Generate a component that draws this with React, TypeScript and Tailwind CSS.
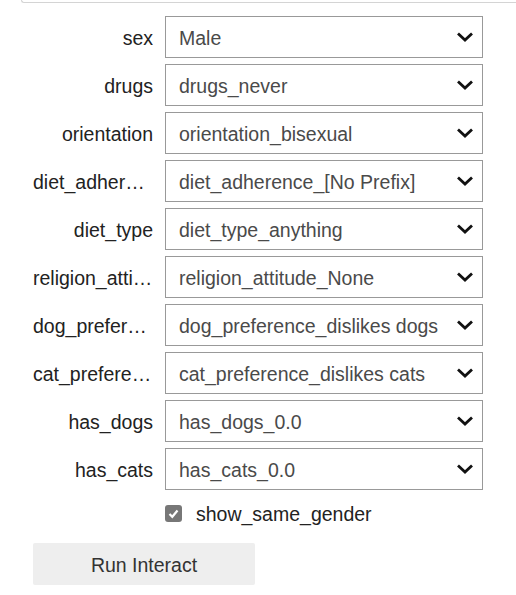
import React from "react";

const rows: [string, string][] = [
  ["sex", "Male"],
  ["drugs", "drugs_never"],
  ["orientation", "orientation_bisexual"],
  ["diet_adherence", "diet_adherence_[No Prefix]"],
  ["diet_type", "diet_type_anything"],
  ["religion_attitude", "religion_attitude_None"],
  ["dog_preference", "dog_preference_dislikes dogs"],
  ["cat_preference", "cat_preference_dislikes cats"],
  ["has_dogs", "has_dogs_0.0"],
  ["has_cats", "has_cats_0.0"],
];

const Chevron = () => (
  <svg width="18" height="12" viewBox="0 0 18 12" className="shrink-0">
    <path d="M2 2.5 L9 9 L16 2.5" fill="none" stroke="#111" strokeWidth="2.8" />
  </svg>
);

const Dropdown = ({ label, value }: { label: string; value: string }) => (
  <div className="flex items-center h-[42px]">
    <div className="w-[120px] pt-[3px] text-right truncate text-[19.5px] text-[#222]">{label}</div>
    <div className="ml-[12px] w-[318px] h-[42px] border border-[#999] flex items-center pl-[13px] pr-[8px] bg-white">
      <span className="flex-1 pt-[3px] truncate text-[19.5px] text-[#4a4a4a]">{value}</span>
      <Chevron />
    </div>
  </div>
);

const App = () => {
  return (
    <div className="w-[516px] h-[595px] bg-white font-['Liberation_Sans',Arial,sans-serif] overflow-hidden">
      <div className="ml-[21px] h-[3px] border-l border-b border-[#d4d4d4] rounded-bl-[4px]" />
      <div className="pl-[33px] pt-[13px] flex flex-col gap-[6px]">
        {rows.map(([l, v]) => (
          <Dropdown key={l} label={l} value={v} />
        ))}
      </div>
      <div className="pl-[165px] mt-[11px] flex items-center h-[24px]">
        <div className="w-[17px] h-[17px] rounded-[3px] bg-[#777] flex items-center justify-center">
          <svg width="13" height="13" viewBox="0 0 13 13">
            <path d="M2.5 7 L5.3 9.8 L10.5 3.5" fill="none" stroke="#fff" strokeWidth="2.2" />
          </svg>
        </div>
        <span className="ml-[14px] pt-[4px] text-[19.5px] text-[#222]">show_same_gender</span>
      </div>
      <div className="pl-[33px] mt-[18px]">
        <button className="w-[222px] h-[42px] pt-[3px] bg-[#eeeeee] rounded-[2px] text-[19.5px] text-[#333]">
          Run Interact
        </button>
      </div>
    </div>
  );
};

export default App;
